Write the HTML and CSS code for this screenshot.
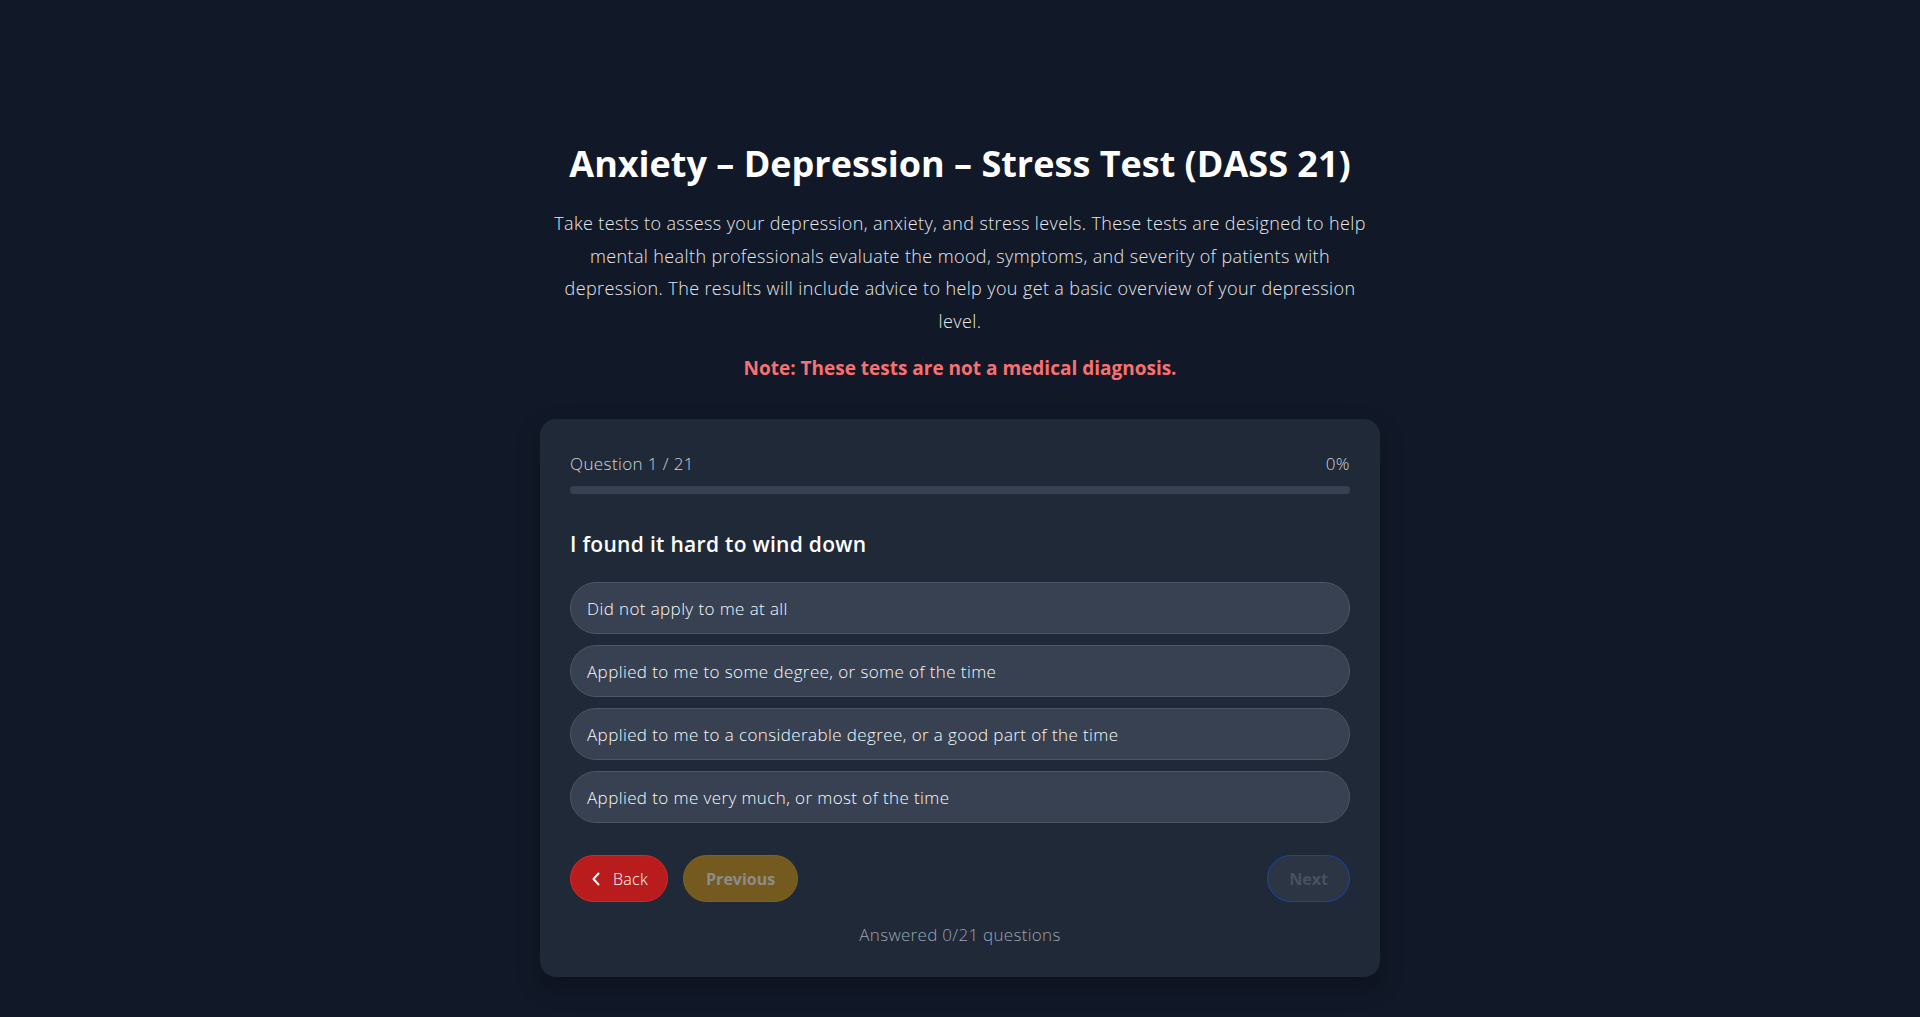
FILE: index.html
```html
<!DOCTYPE html>
<html lang="en">
<head>
<meta charset="utf-8">
<title>Anxiety – Depression – Stress Test (DASS 21)</title>
<link rel="stylesheet" href="styles.css">
</head>
<body>
<main class="page">
  <header class="intro">
    <h1 class="title">Anxiety – Depression – Stress Test (DASS 21)</h1>
    <p class="lead">Take tests to assess your depression, anxiety, and stress levels. These tests are designed to help mental health professionals evaluate the mood, symptoms, and severity of patients with depression. The results will include advice to help you get a basic overview of your depression level.</p>
    <p class="note">Note: These tests are not a medical diagnosis.</p>
  </header>

  <section class="card">
    <div class="progress-head">
      <span>Question 1 / 21</span>
      <span>0%</span>
    </div>
    <div class="track"><div class="fill" style="width:0%"></div></div>

    <h2 class="question">I found it hard to wind down</h2>

    <div class="options">
      <button class="option">Did not apply to me at all</button>
      <button class="option">Applied to me to some degree, or some of the time</button>
      <button class="option">Applied to me to a considerable degree, or a good part of the time</button>
      <button class="option">Applied to me very much, or most of the time</button>
    </div>

    <div class="nav">
      <div class="nav-left">
        <button class="btn btn-back">
          <svg class="chev" width="10" height="16" viewBox="0 0 10 16" fill="none"><path d="M7.5 2.5 L2.5 8 L7.5 13.5" stroke="#ffffff" stroke-width="2" stroke-linecap="round" stroke-linejoin="round"/></svg>
          <span>Back</span>
        </button>
        <button class="btn btn-prev">Previous</button>
      </div>
      <button class="btn btn-next">Next</button>
    </div>

    <p class="answered">Answered 0/21 questions</p>
  </section>
</main>
</body>
</html>
```

FILE: styles.css
```css
* { box-sizing: border-box; }

html, body {
  margin: 0;
  padding: 0;
  background: #111827;
}

body {
  font-family: "Open Sans", "Liberation Sans", sans-serif;
  color: #e5e7eb;
  min-height: 1017px;
}

.page {
  width: 840px;
  margin: 0 auto;
  padding-top: 144px;
  padding-bottom: 40px;
}

.intro {
  text-align: center;
}

.title {
  margin: 0 0 23px;
  font-size: 36px;
  line-height: 40px;
  font-weight: 700;
  color: #ffffff;
}

.lead {
  max-width: 826px;
  margin: 0 auto 18px;
  font-size: 18px;
  letter-spacing: 0.38px;
  line-height: 32.5px;
  font-weight: 300;
  color: #e5e7eb;
}

.note {
  margin: 0 0 37px;
  font-size: 19px;
  line-height: 27px;
  font-weight: 700;
  color: #f87171;
}

.card {
  background: #1f2937;
  border-radius: 16px;
  padding: 31px 30px 30px;
  box-shadow: 0 10px 25px rgba(0, 0, 0, 0.25);
}

.progress-head {
  display: flex;
  justify-content: space-between;
  font-size: 17px;
  letter-spacing: 0.4px;
  line-height: 28px;
  font-weight: 300;
  color: #d1d5db;
}

.track {
  margin-top: 8px;
  height: 8px;
  border-radius: 4px;
  background: #374151;
  overflow: hidden;
}

.fill {
  height: 100%;
  background: #3b82f6;
}

.question {
  margin: 36px 0 24px;
  font-size: 21px;
  letter-spacing: 0.3px;
  line-height: 28px;
  font-weight: 600;
  color: #ffffff;
}

.options {
  display: flex;
  flex-direction: column;
  gap: 11px;
}

.option {
  display: block;
  width: 100%;
  height: 52px;
  padding: 0 16px;
  text-align: left;
  font-family: inherit;
  font-size: 17px;
  letter-spacing: 0.4px;
  font-weight: 300;
  color: #f9fafb;
  background: #374151;
  border: 1px solid #4b5563;
  border-radius: 26px;
  cursor: pointer;
}

.nav {
  margin-top: 32px;
  display: flex;
  justify-content: space-between;
  align-items: center;
}

.nav-left {
  display: flex;
  gap: 15px;
}

.btn {
  height: 47px;
  padding: 0 21px;
  border-radius: 24px;
  font-family: inherit;
  font-size: 16px;
  display: inline-flex;
  align-items: center;
  cursor: pointer;
}

.btn-back {
  gap: 12px;
  background: #b91c1c;
  border: 1px solid #dc2626;
  color: #ffffff;
  font-weight: 300;
  letter-spacing: 0.3px;
  padding: 0 19px 0 20px;
}

.chev { display: block; }

.btn-prev {
  background: #745a1f;
  border: 1px solid #7f6421;
  color: #8c8c8c;
  font-weight: 700;
  padding: 0 22px;
}

.btn-next {
  background: #2b3544;
  border: 1px solid #1e45a0;
  color: #475161;
  font-weight: 700;
}

.answered {
  margin: 21px 0 0;
  text-align: center;
  font-size: 17px;
  letter-spacing: 0.3px;
  line-height: 24px;
  font-weight: 300;
  color: #9ca3af;
}
```
